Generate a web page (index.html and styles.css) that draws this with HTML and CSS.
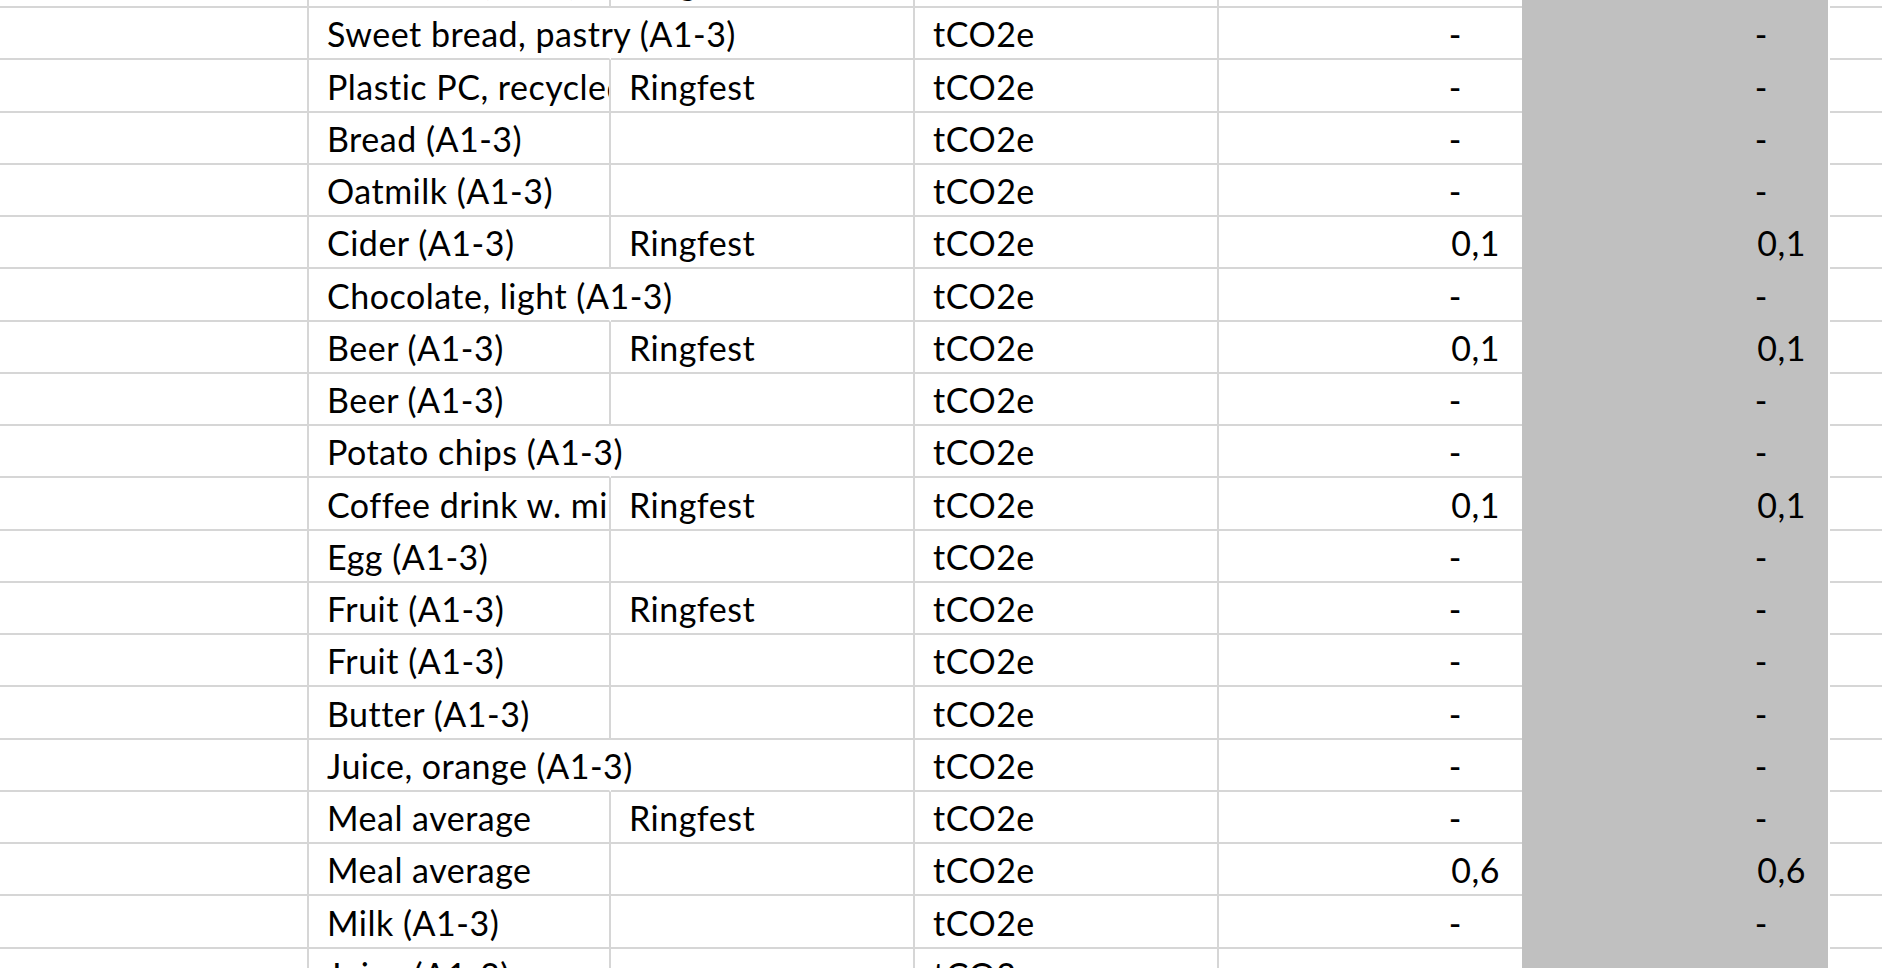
FILE: index.html
```html
<!DOCTYPE html>
<html lang="en">
<head>
<meta charset="utf-8">
<title>Sheet</title>
<link rel="stylesheet" href="styles.css">
</head>
<body>
<div class="sheet">
  <div class="c a top"></div><div class="c t top">Salad mix (A1-3)</div><div class="c t top">Ringfest</div><div class="c t top">tCO2e</div><div class="c n top"></div><div class="c n f top"></div><div class="c g top"></div>

  <div class="c a"></div><div class="c t spill">Sweet bread, pastry (A1-3)</div><div class="c t"></div><div class="c t">tCO2e</div><div class="c n"><span class="dash">-</span></div><div class="c n f"><span class="dash">-</span></div><div class="c g"></div>

  <div class="c a"></div><div class="c t">Plastic PC, recycled (A1-3)</div><div class="c t">Ringfest</div><div class="c t">tCO2e</div><div class="c n"><span class="dash">-</span></div><div class="c n f"><span class="dash">-</span></div><div class="c g"></div>

  <div class="c a"></div><div class="c t">Bread (A1-3)</div><div class="c t"></div><div class="c t">tCO2e</div><div class="c n"><span class="dash">-</span></div><div class="c n f"><span class="dash">-</span></div><div class="c g"></div>

  <div class="c a"></div><div class="c t">Oatmilk (A1-3)</div><div class="c t"></div><div class="c t">tCO2e</div><div class="c n"><span class="dash">-</span></div><div class="c n f"><span class="dash">-</span></div><div class="c g"></div>

  <div class="c a"></div><div class="c t">Cider (A1-3)</div><div class="c t">Ringfest</div><div class="c t">tCO2e</div><div class="c n">0,1</div><div class="c n f">0,1</div><div class="c g"></div>

  <div class="c a"></div><div class="c t spill">Chocolate, light (A1-3)</div><div class="c t"></div><div class="c t">tCO2e</div><div class="c n"><span class="dash">-</span></div><div class="c n f"><span class="dash">-</span></div><div class="c g"></div>

  <div class="c a"></div><div class="c t">Beer (A1-3)</div><div class="c t">Ringfest</div><div class="c t">tCO2e</div><div class="c n">0,1</div><div class="c n f">0,1</div><div class="c g"></div>

  <div class="c a"></div><div class="c t">Beer (A1-3)</div><div class="c t"></div><div class="c t">tCO2e</div><div class="c n"><span class="dash">-</span></div><div class="c n f"><span class="dash">-</span></div><div class="c g"></div>

  <div class="c a"></div><div class="c t spill">Potato chips (A1-3)</div><div class="c t"></div><div class="c t">tCO2e</div><div class="c n"><span class="dash">-</span></div><div class="c n f"><span class="dash">-</span></div><div class="c g"></div>

  <div class="c a"></div><div class="c t">Coffee drink w. milk (A1-3)</div><div class="c t">Ringfest</div><div class="c t">tCO2e</div><div class="c n">0,1</div><div class="c n f">0,1</div><div class="c g"></div>

  <div class="c a"></div><div class="c t">Egg (A1-3)</div><div class="c t"></div><div class="c t">tCO2e</div><div class="c n"><span class="dash">-</span></div><div class="c n f"><span class="dash">-</span></div><div class="c g"></div>

  <div class="c a"></div><div class="c t">Fruit (A1-3)</div><div class="c t">Ringfest</div><div class="c t">tCO2e</div><div class="c n"><span class="dash">-</span></div><div class="c n f"><span class="dash">-</span></div><div class="c g"></div>

  <div class="c a"></div><div class="c t">Fruit (A1-3)</div><div class="c t"></div><div class="c t">tCO2e</div><div class="c n"><span class="dash">-</span></div><div class="c n f"><span class="dash">-</span></div><div class="c g"></div>

  <div class="c a"></div><div class="c t">Butter (A1-3)</div><div class="c t"></div><div class="c t">tCO2e</div><div class="c n"><span class="dash">-</span></div><div class="c n f"><span class="dash">-</span></div><div class="c g"></div>

  <div class="c a"></div><div class="c t spill">Juice, orange (A1-3)</div><div class="c t"></div><div class="c t">tCO2e</div><div class="c n"><span class="dash">-</span></div><div class="c n f"><span class="dash">-</span></div><div class="c g"></div>

  <div class="c a"></div><div class="c t">Meal average</div><div class="c t">Ringfest</div><div class="c t">tCO2e</div><div class="c n"><span class="dash">-</span></div><div class="c n f"><span class="dash">-</span></div><div class="c g"></div>

  <div class="c a"></div><div class="c t">Meal average</div><div class="c t"></div><div class="c t">tCO2e</div><div class="c n">0,6</div><div class="c n f">0,6</div><div class="c g"></div>

  <div class="c a"></div><div class="c t">Milk (A1-3)</div><div class="c t"></div><div class="c t">tCO2e</div><div class="c n"><span class="dash">-</span></div><div class="c n f"><span class="dash">-</span></div><div class="c g"></div>

  <div class="c a"></div><div class="c t">Juice (A1-3)</div><div class="c t"></div><div class="c t">tCO2e</div><div class="c n"><span class="dash">-</span></div><div class="c n f"><span class="dash">-</span></div><div class="c g"></div>
</div>
</body>
</html>
```

FILE: styles.css
```css
html, body {
  margin: 0;
  padding: 0;
  background: #ffffff;
}

body {
  width: 1882px;
  height: 968px;
  overflow: hidden;
  font-family: Lato, "Liberation Sans", sans-serif;
  font-size: 34px;
  letter-spacing: 0.5px;
  color: #000000;
}

.sheet {
  display: grid;
  grid-template-columns: 309px 302px 304px 304px 303px 306px 1fr;
  grid-template-rows: 8px;
  grid-auto-rows: 52.25px;
}

.c {
  box-sizing: border-box;
  border-bottom: 2px solid #d6d6d6;
  display: flex;
  align-items: flex-end;
  white-space: nowrap;
  line-height: 38px;
  padding-bottom: 5px;
  overflow: hidden;
}

.a {
  border-right: 2px solid #d6d6d6;
}

.t {
  border-right: 2px solid #d6d6d6;
  padding-left: 18px;
}

.spill {
  overflow: visible;
  border-right-color: transparent;
}

.n {
  justify-content: flex-end;
  padding-right: 22px;
}

.dash {
  padding-right: 38px;
}

.f {
  background: #c0c0c0;
  border-bottom-color: transparent;
}

.g {
  margin-left: 2px;
}

.top {
  overflow: visible;
}
```
